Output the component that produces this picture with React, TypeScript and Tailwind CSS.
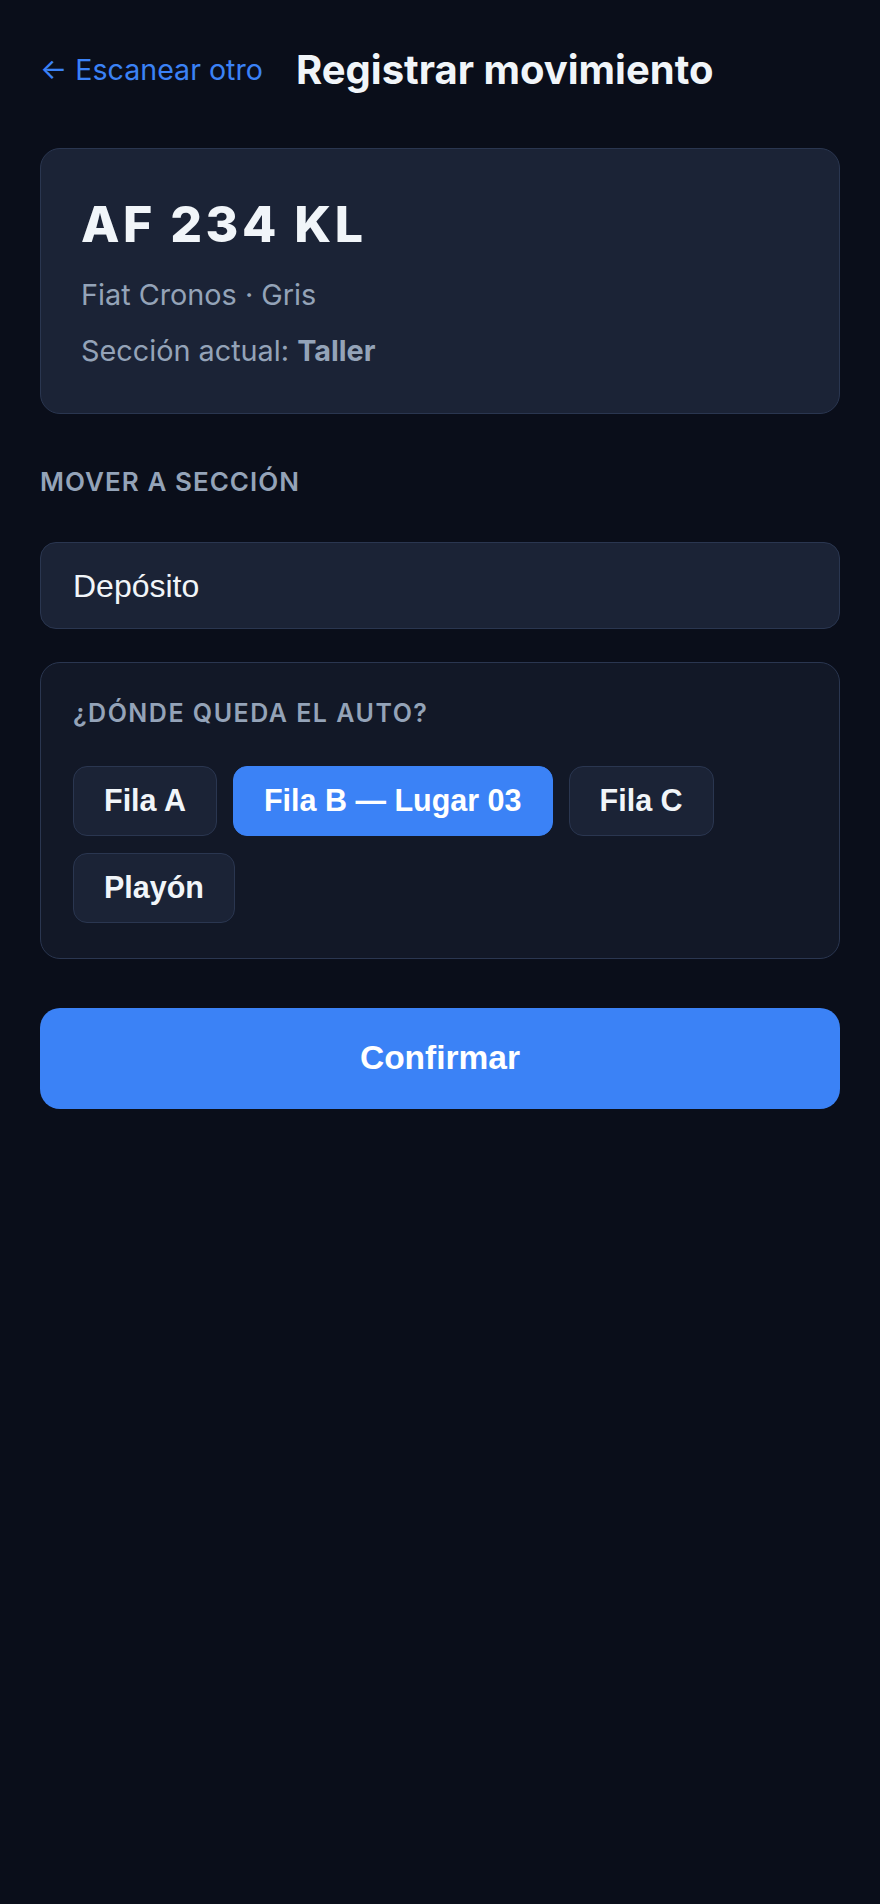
import { useState } from 'react';

const SPOTS = ['Fila A', 'Fila B — Lugar 03', 'Fila C', 'Playón'];

const App = () => {
  const [spot, setSpot] = useState('Fila B — Lugar 03');
  const [section, setSection] = useState('Depósito');

  return (
    <div className="min-h-[1904px] w-full bg-[#0a0e1a] px-[40px] pt-[46px] font-['Inter',sans-serif] text-[#f1f5f9]">
      <div className="flex h-[48px] items-center gap-[33px]">
        <button className="font-['Inter',sans-serif] text-[28.6px] leading-[48px] text-[#3b82f6]">← Escanear otro</button>
        <h1 className="text-[40px] leading-[48px] font-bold">Registrar movimiento</h1>
      </div>

      <div className="mt-[54px] rounded-[20px] border-[1.5px] border-[#2a3650] bg-[#1b2336] px-[40px] pt-[46px] pb-[44px]">
        <div className="text-[50px] leading-[58px] font-extrabold tracking-[0.07em]">AF 234 KL</div>
        <div className="mt-[24px] text-[28.8px] leading-[36px] text-[#94a3b8]">Fiat Cronos · Gris</div>
        <div className="mt-[20px] text-[28.8px] leading-[36px] text-[#94a3b8]">
          Sección actual: <span className="font-bold">Taller</span>
        </div>
      </div>

      <div className="mt-[52px] text-[26px] leading-[32px] font-semibold tracking-[0.04em] text-[#94a3b8]">
        MOVER A SECCIÓN
      </div>

      <select
        value={section}
        onChange={e => setSection(e.target.value)}
        className="mt-[44px] block h-[87px] w-full appearance-none rounded-[16px] border-[1.5px] border-[#2a3650] bg-[#1b2336] px-[32px] font-['Liberation_Sans',Arial,sans-serif] text-[32px] text-[#f1f5f9] outline-none">
        <option>Depósito</option>
        <option>Taller</option>
        <option>Lavadero</option>
        <option>Exhibición</option>
      </select>

      <div className="mt-[33px] rounded-[20px] border-[1.5px] border-[#2a3650] bg-[#121827] px-[32px] pt-[35px] pb-[35px]">
        <div className="text-[25px] leading-[30px] font-semibold tracking-[0.06em] text-[#94a3b8]">
          ¿DÓNDE QUEDA EL AUTO?
        </div>
        <div className="mt-[38px] flex flex-wrap gap-x-[16px] gap-y-[17px]">
          {SPOTS.map(s => (
            <button
              key={s}
              onClick={() => setSpot(s)}
              className={
                s === spot
                  ? "h-[70px] rounded-[14px] border-[1.5px] border-[#3b82f6] bg-[#3b82f6] px-[30px] font-['Liberation_Sans',Arial,sans-serif] text-[30.5px] font-bold text-white"
                  : "h-[70px] rounded-[14px] border-[1.5px] border-[#2a3650] bg-[#1b2336] px-[30px] font-['Liberation_Sans',Arial,sans-serif] text-[30.5px] font-bold text-[#f1f5f9]"
              }>
              {s}
            </button>
          ))}
        </div>
      </div>

      <button className="mt-[49px] block h-[101px] w-full rounded-[20px] bg-[#3b82f6] font-['Liberation_Sans',Arial,sans-serif] text-[33.5px] font-bold text-white">
        Confirmar
      </button>
    </div>
  );
};

export default App;
